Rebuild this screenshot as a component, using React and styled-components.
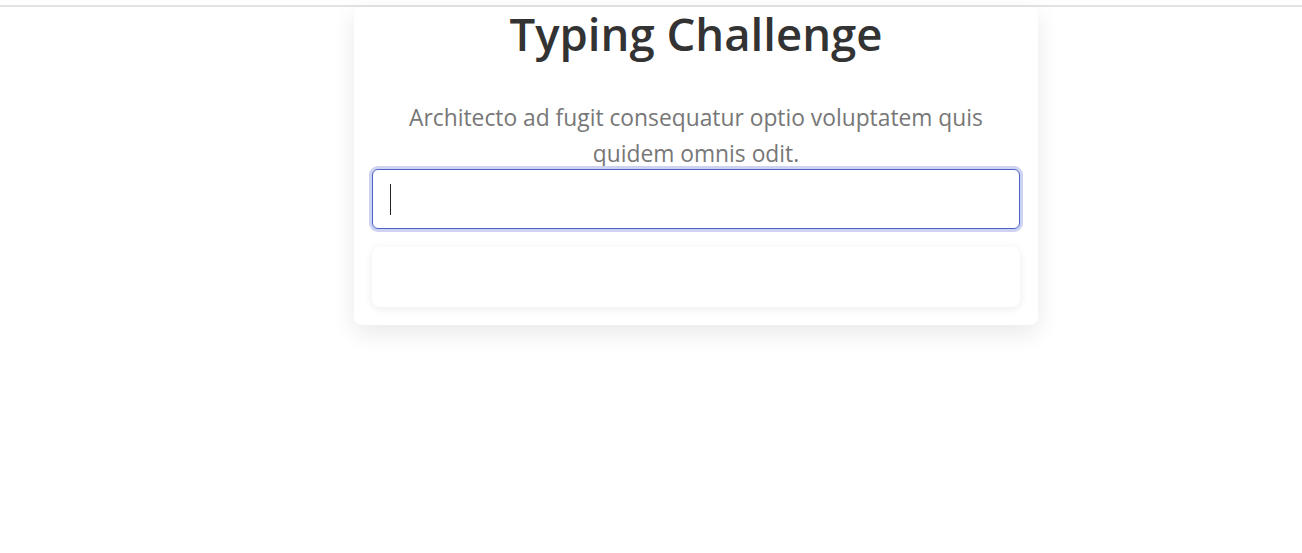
import React from "react";
import styled, { createGlobalStyle } from "styled-components";

const Global = createGlobalStyle`
  html, body { margin: 0; padding: 0; background: #fff; }
  body { font-family: "Open Sans", "Noto Sans", sans-serif; }
`;

const Page = styled.div`
  min-height: 553px;
  background: #fff;
`;

const TopRule = styled.div`
  height: 5px;
  border-bottom: 2px solid #e3e3e3;
`;

const Stage = styled.main`
  display: flex;
  padding-left: 354px;
`;

const Card = styled.section`
  width: 684px;
  box-sizing: border-box;
  padding: 0 18px 18px;
  background: #fff;
  border-radius: 0 0 8px 8px;
  box-shadow: 0 8px 24px rgba(0, 0, 0, 0.09);
  display: flex;
  flex-direction: column;
`;

const Title = styled.h1`
  margin: 0;
  font-size: 45.5px;
  line-height: 53px;
  font-weight: 600;
  color: #333;
  text-align: center;
`;

const Prompt = styled.p`
  margin: 40px 0 -3px;
  font-size: 22.8px;
  line-height: 36px;
  color: #777;
  text-align: center;
`;

const Field = styled.div`
  height: 60px;
  box-sizing: border-box;
  border: 1px solid #4a62c9;
  border-radius: 6px;
  box-shadow: 0 0 0 3px #cdd3f1;
  display: flex;
  align-items: center;
  padding-left: 17px;
  background: #fff;
`;

const Caret = styled.span`
  display: inline-block;
  width: 1px;
  height: 31px;
  background: #222;
`;

const Result = styled.div`
  margin-top: 18px;
  height: 60px;
  border-radius: 8px;
  background: #fff;
  box-shadow: 0 2px 10px rgba(0, 0, 0, 0.08);
`;

export default function App() {
  return (
    <Page>
      <Global />
      <TopRule />
      <Stage>
        <Card>
          <Title>Typing Challenge</Title>
          <Prompt>
            Architecto ad fugit consequatur optio voluptatem quis
            <br />
            quidem omnis odit.
          </Prompt>
          <Field>
            <Caret />
          </Field>
          <Result />
        </Card>
      </Stage>
    </Page>
  );
}
